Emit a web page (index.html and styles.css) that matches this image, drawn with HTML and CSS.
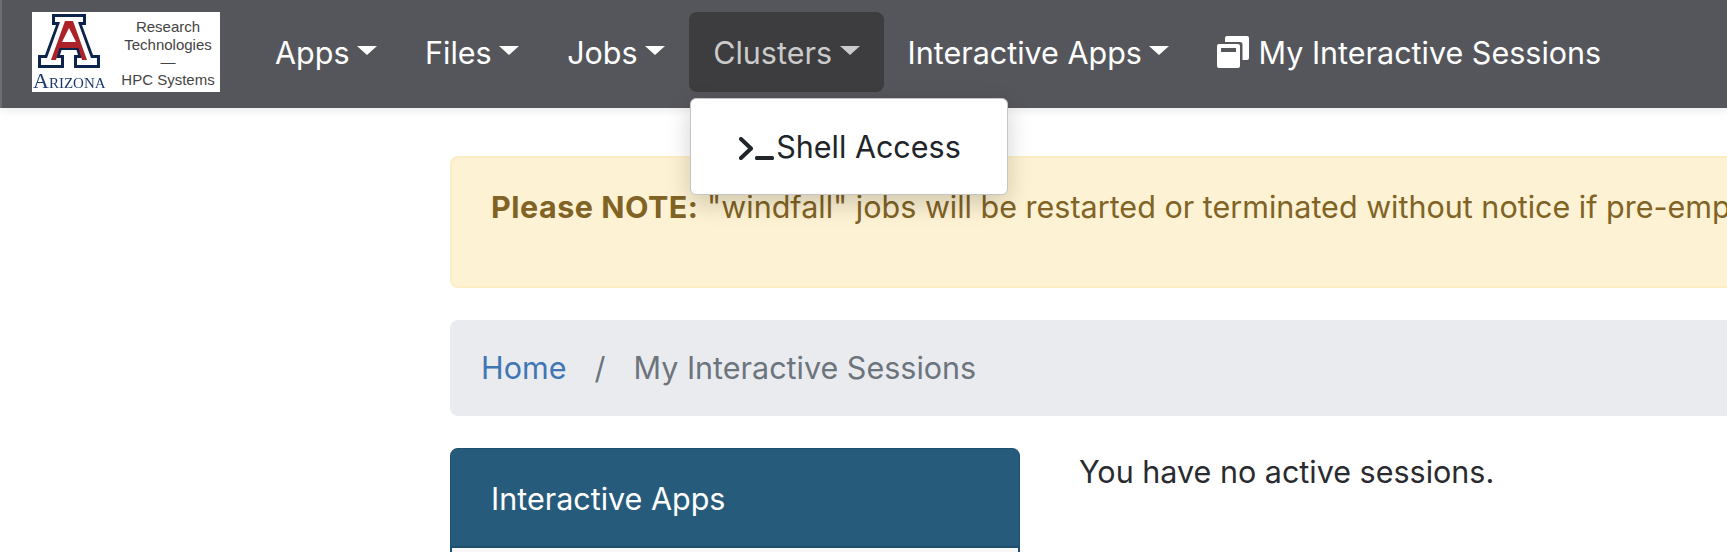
FILE: index.html
```html
<!DOCTYPE html>
<html lang="en">
<head>
<meta charset="utf-8">
<title>My Interactive Sessions</title>
<link rel="stylesheet" href="styles.css">
</head>
<body>
<nav class="navbar">
  <a class="brand" href="#">
    <span class="brand-mark">
      <svg class="block-a" viewBox="0 0 62 54" aria-hidden="true">
        <path fill="#0c234b" d="M14 0H48V11H44L55 41H62V54H36V41H40L38.500 36H23.500L22 41H26V54H0V41H7L18 11H14Z"/>
        <path fill="#fff" d="M17 3H45V8H40L53 44H59V51H39V44H44L41 33H21L18 44H23V51H3V44H9L22 8H17Z"/>
        <path fill="#ab2328" d="M27 7H35L49 46H44L40.500 34H21.500L18 46H13ZM31 14L24 28H38Z"/>
      </svg>
      <span class="wordmark">Arizona</span>
    </span>
    <span class="brand-text">Research<br>Technologies<br>&mdash;<br>HPC Systems</span>
  </a>
  <ul class="nav-list">
    <li class="nav-item caret">Apps</li>
    <li class="nav-item caret">Files</li>
    <li class="nav-item caret">Jobs</li>
    <li class="nav-item caret active">
      Clusters
      <div class="dropdown">
        <a class="dropdown-item" href="#">
          <svg class="icon-terminal" viewBox="0 0 35 23" aria-hidden="true">
            <path d="M2 2L12 11.500L2 21" fill="none" stroke="#212529" stroke-width="4" stroke-linecap="round" stroke-linejoin="round"/>
            <rect x="16" y="19" width="19" height="4" rx="1.500" fill="#212529"/>
          </svg>Shell Access
        </a>
      </div>
    </li>
    <li class="nav-item caret">Interactive Apps</li>
    <li class="nav-item">
      <svg class="icon-windows" viewBox="0 0 32 32" aria-hidden="true">
        <path fill="#fff" d="M10 0H30A2 2 0 0 1 32 2V22A2 2 0 0 1 30 24H25.500V8.500A2.500 2.500 0 0 0 23 6H8V2A2 2 0 0 1 10 0Z"/>
        <path fill="#fff" fill-rule="evenodd" d="M2 8H21A2 2 0 0 1 23 10V30A2 2 0 0 1 21 32H2A2 2 0 0 1 0 30V10A2 2 0 0 1 2 8ZM4 12V16H19V12Z"/>
      </svg>My Interactive Sessions
    </li>
  </ul>
</nav>
<main class="content">
  <div class="alert"><strong>Please NOTE:</strong> "windfall" jobs will be restarted or terminated without notice if pre-empted by a higher priority job.</div>
  <ol class="breadcrumb">
    <li><a href="#">Home</a></li>
    <li class="sep">/</li>
    <li class="current">My Interactive Sessions</li>
  </ol>
  <div class="columns">
    <aside class="panel">
      <div class="panel-heading">Interactive Apps</div>
      <div class="panel-body"></div>
    </aside>
    <p class="no-sessions">You have no active sessions.</p>
  </div>
</main>
</body>
</html>
```
FILE: styles.css
```css
* { box-sizing: border-box; }
html, body { margin: 0; height: 552px; overflow: hidden; background: #fff; }
body { font-family: Inter, "Liberation Sans", sans-serif; font-size: 30.500px; color: #212529; line-height: 40px; }
a { text-decoration: none; color: inherit; }

.navbar {
  position: relative;
  z-index: 2;
  display: flex;
  align-items: flex-start;
  height: 108px;
  padding: 12px 0 0 30px;
  background: #55565b;
  border-left: 2px solid #6c6d71;
  box-shadow: 0 3px 8px rgba(0, 0, 0, .08);
}
.brand {
  display: flex;
  flex: none;
  width: 188px;
  height: 80px;
  margin-right: 31px;
  background: #fff;
  filter: blur(.4px);
}
.brand-mark { position: relative; display: block; width: 78px; height: 80px; flex: none; }
.block-a { position: absolute; left: 6px; top: 2px; width: 62px; height: 54px; }
.wordmark {
  position: absolute;
  left: 1px;
  top: 58px;
  font-family: "Liberation Serif", serif;
  font-size: 22px;
  line-height: 22px;
  color: #1c3a6e;
  font-variant: small-caps;
}
.brand-text {
  flex: 1;
  padding-top: 6px;
  padding-left: 6px;
  font-family: "Liberation Sans", sans-serif;
  font-size: 15px;
  line-height: 17.500px;
  color: #444;
  text-align: center;
  white-space: nowrap;
}
.nav-list { display: flex; list-style: none; margin: 0; padding: 0; }
.nav-item {
  position: relative;
  display: flex;
  align-items: center;
  height: 80px;
  padding: 2px 24px 0;
  color: #fff;
  white-space: nowrap;
  border-radius: 8px;
}
.caret::after {
  content: "";
  margin-left: 7.500px;
  margin-top: -6px;
  border-top: 9px solid currentColor;
  border-left: 10px solid transparent;
  border-right: 10px solid transparent;
}
.nav-item.active { background: #3d3d3f; color: #cbcbcb; }
.icon-windows { width: 32px; height: 32px; margin: -2px 9px 0 0; }

.dropdown {
  position: absolute;
  left: 1px;
  top: 86px;
  width: 318px;
  height: 97px;
  background: #fff;
  border: 1px solid #c4c4c4;
  border-radius: 6px;
  box-shadow: 0 8px 24px rgba(0, 0, 0, .18);
}
.dropdown-item {
  display: flex;
  align-items: center;
  height: 100%;
  padding-left: 48px;
  color: #212529;
}
.icon-terminal { width: 35px; height: 23px; margin-right: 2px; margin-top: 3px; }

.content { width: 1900px; padding: 48px 0 0 450px; }
.alert {
  height: 132px;
  padding: 29px 0 0 39px;
  background: #fdf2d3;
  border: 2px solid #fceec4;
  border-radius: 8px;
  color: #806325;
  white-space: nowrap;
}
.alert strong { font-weight: 700; letter-spacing: .5px; }
.breadcrumb {
  display: flex;
  align-items: center;
  height: 96px;
  margin: 32px 0;
  padding: 0 0 0 31px;
  list-style: none;
  background: #eaebef;
  border-radius: 8px;
}
.breadcrumb a { color: #3f77b5; }
.sep { margin: 0 28px 0 28px; color: #6c757d; }
.current { color: #6c757d; }

.columns { display: flex; align-items: flex-start; }
.panel { width: 570px; flex: none; }
.panel-heading {
  height: 100px;
  padding: 30px 0 0 40px;
  background: #265b7c;
  border: 1px solid #1f4f6e;
  border-bottom: 2px solid #1f4f6e;
  border-radius: 8px 8px 0 0;
  color: #fff;
}
.panel-body { height: 40px; background: #f8f8f8; border-left: 2px solid #1f4f6e; border-right: 2px solid #1f4f6e; }
.no-sessions { margin: 4px 0 0 59px; color: #292b2f; }
```
